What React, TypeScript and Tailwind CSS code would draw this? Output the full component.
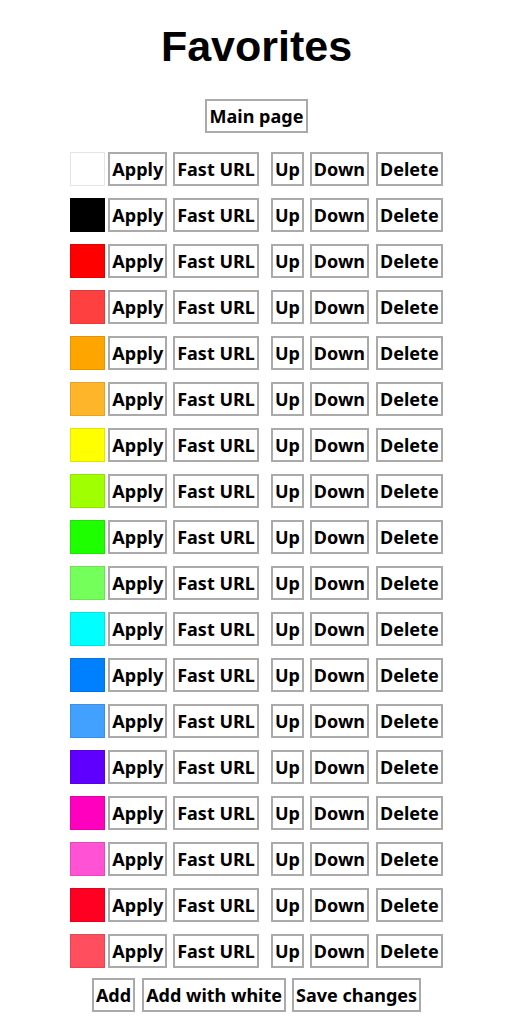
const colors = [
  "#ffffff",
  "#000000",
  "#ff0000",
  "#ff4040",
  "#ffa500",
  "#ffb52a",
  "#ffff00",
  "#a0ff00",
  "#1eff00",
  "#74ff5a",
  "#00ffff",
  "#0080ff",
  "#42a1ff",
  "#5f00ff",
  "#ff00bf",
  "#ff52d4",
  "#ff0022",
  "#ff4f5e",
];

function Btn({ children, className = "" }: { children: React.ReactNode; className?: string }) {
  return (
    <button
      className={
        "h-[34px] border-2 border-[#aaaaaa] bg-white text-black text-[18px] font-bold leading-none " +
        className
      }
    >
      {children}
    </button>
  );
}

export default function App() {
  return (
    <div
      className="min-h-[1016px] bg-white pr-[9px] flex flex-col items-center"
      style={{ fontFamily: '"Noto Sans", sans-serif' }}
    >
      <h1
        className="text-[43px] font-bold leading-none mt-[25px] mb-[31px] text-black"
        style={{ fontFamily: '"Liberation Sans", Arial, sans-serif' }}
      >
        Favorites
      </h1>

      <Btn className="px-[3px]">Main page</Btn>

      <div className="mt-[19px] flex flex-col gap-[12px]">
        {colors.map((c, i) => (
          <div key={i} className="flex items-center">
            <div
              className="w-[35px] h-[34px] border border-black/10"
              style={{ backgroundColor: c }}
            />
            <Btn className="ml-[3px] px-[2px]">Apply</Btn>
            <Btn className="ml-[6px] px-[2px]">Fast URL</Btn>
            <Btn className="ml-[12px] px-[2px]">Up</Btn>
            <Btn className="ml-[6px] px-[2px]">Down</Btn>
            <Btn className="ml-[7px] px-[2px]">Delete</Btn>
          </div>
        ))}
      </div>

      <div className="mt-[10px] flex">
        <Btn className="px-[2px]">Add</Btn>
        <Btn className="ml-[7px] px-[2px]">Add with white</Btn>
        <Btn className="ml-[6px] px-[2px]">Save changes</Btn>
      </div>
    </div>
  );
}
